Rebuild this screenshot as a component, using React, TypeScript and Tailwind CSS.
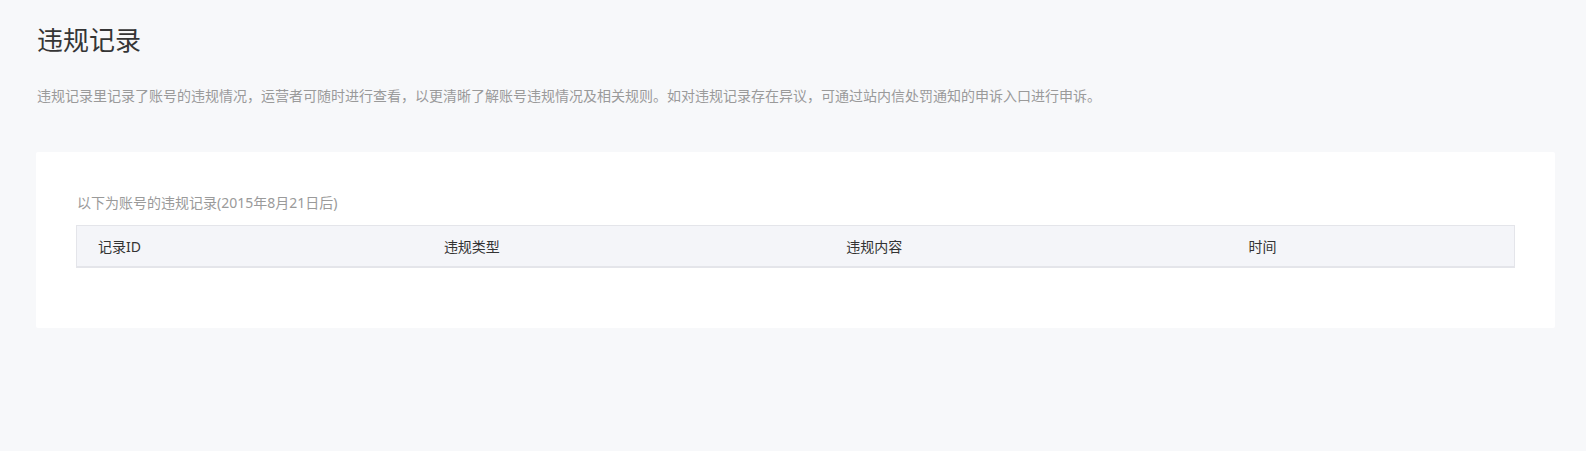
const font = { fontFamily: '"Noto Sans", "Noto Sans CJK SC", sans-serif' };

const columns = [
  { label: "记录ID", width: "w-[24%] pl-[21px]" },
  { label: "违规类型", width: "w-[28%] pl-[22px]" },
  { label: "违规内容", width: "w-[28%] pl-[22px]" },
  { label: "时间", width: "w-[20%] pl-[22px]" },
];

export default function App() {
  return (
    <div className="min-h-[451px] bg-[#f7f8fa] pl-[36px] pr-[31px] pt-[22px]" style={font}>
      <h1 className="pl-px text-[26px] leading-[36px] text-[#353535]">违规记录</h1>
      <p className="mt-[28px] pl-px text-[14px] leading-[20px] text-[#9a9a9a]">
        违规记录里记录了账号的违规情况，运营者可随时进行查看，以更清晰了解账号违规情况及相关规则。如对违规记录存在异议，可通过站内信处罚通知的申诉入口进行申诉。
      </p>

      <div className="mt-[46px] rounded-[2px] bg-white px-[40px] pt-[41px] pb-[60px]">
        <div className="pl-px text-[14px] leading-[20px] text-[#9a9a9a]">
          以下为账号的违规记录(2015年8月21日后)
        </div>
        <div className="mt-[12px] flex h-[43px] items-center border border-b-2 border-[#e4e5ea] bg-[#f4f5f9]">
          {columns.map((col) => (
            <div key={col.label} className={`${col.width} pr-[20px] text-[14px] text-[#333]`}>
              {col.label}
            </div>
          ))}
        </div>
      </div>
    </div>
  );
}
